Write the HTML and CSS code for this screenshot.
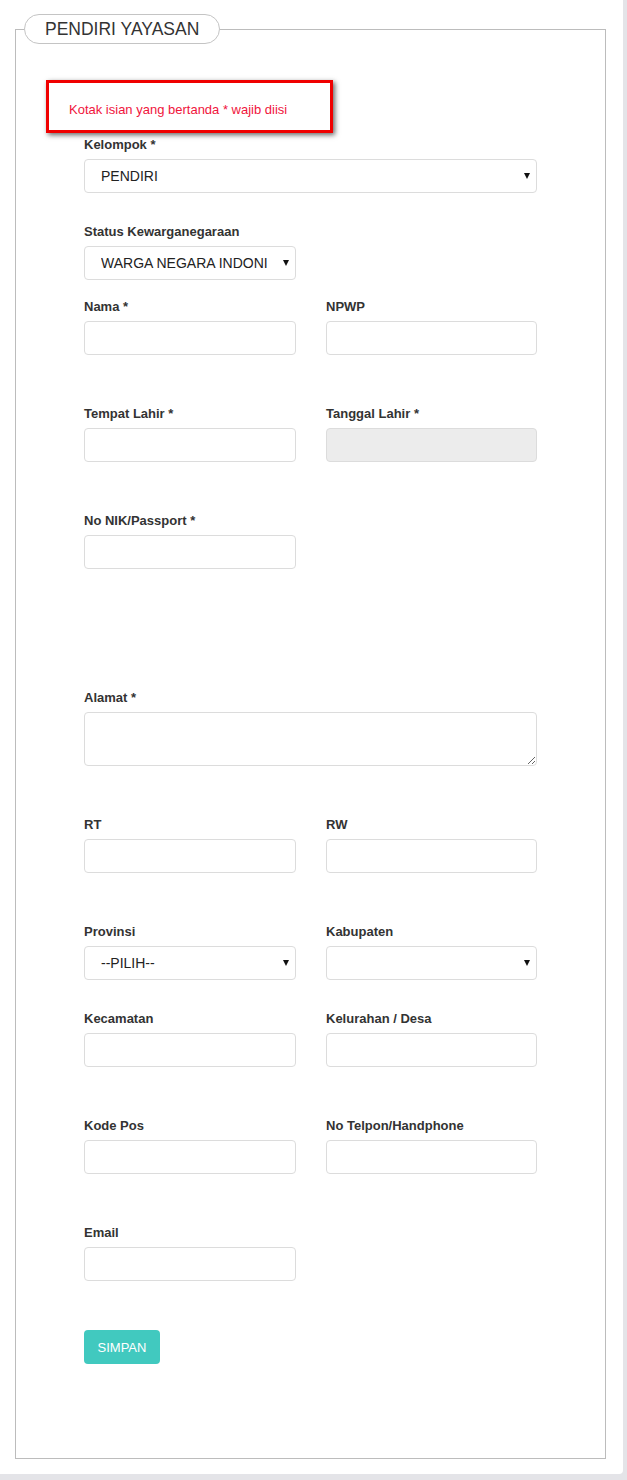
FILE: index.html
```html
<!DOCTYPE html>
<html>
<head>
<meta charset="utf-8">
<link rel="stylesheet" href="styles.css">
</head>
<body>
<div class="card">
  <fieldset class="box">
    <legend class="box-title">PENDIRI YAYASAN</legend>
    <div class="notice">Kotak isian yang bertanda * wajib diisi</div>
    <form class="form">
      <div class="group mt-2">
        <label class="lbl">Kelompok *</label>
        <div class="sel"><select class="ctl"><option>PENDIRI</option></select></div>
      </div>
      <div class="row mt-29">
        <div class="group">
          <label class="lbl">Status Kewarganegaraan</label>
          <div class="sel"><select class="ctl"><option>WARGA NEGARA INDONI</option></select></div>
        </div>
      </div>
      <div class="row mt-17">
        <div class="group"><label class="lbl">Nama *</label><input class="ctl" type="text"></div>
        <div class="group"><label class="lbl">NPWP</label><input class="ctl" type="text"></div>
      </div>
      <div class="row mt-49">
        <div class="group"><label class="lbl">Tempat Lahir *</label><input class="ctl" type="text"></div>
        <div class="group"><label class="lbl">Tanggal Lahir *</label><input class="ctl disabled" type="text" disabled></div>
      </div>
      <div class="row mt-49">
        <div class="group"><label class="lbl">No NIK/Passport *</label><input class="ctl" type="text"></div>
      </div>
      <div class="group mt-119">
        <label class="lbl">Alamat *</label>
        <textarea class="ctl area"></textarea>
      </div>
      <div class="row mt-49">
        <div class="group"><label class="lbl">RT</label><input class="ctl" type="text"></div>
        <div class="group"><label class="lbl">RW</label><input class="ctl" type="text"></div>
      </div>
      <div class="row mt-49">
        <div class="group">
          <label class="lbl">Provinsi</label>
          <div class="sel"><select class="ctl"><option>--PILIH--</option></select></div>
        </div>
        <div class="group">
          <label class="lbl">Kabupaten</label>
          <div class="sel"><select class="ctl"><option></option></select></div>
        </div>
      </div>
      <div class="row mt-29">
        <div class="group"><label class="lbl">Kecamatan</label><input class="ctl" type="text"></div>
        <div class="group"><label class="lbl">Kelurahan / Desa</label><input class="ctl" type="text"></div>
      </div>
      <div class="row mt-49">
        <div class="group"><label class="lbl">Kode Pos</label><input class="ctl" type="text"></div>
        <div class="group"><label class="lbl">No Telpon/Handphone</label><input class="ctl" type="text"></div>
      </div>
      <div class="row mt-49">
        <div class="group"><label class="lbl">Email</label><input class="ctl" type="text"></div>
      </div>
      <div class="actions">
        <button type="button" class="btn">SIMPAN</button>
      </div>
    </form>
  </fieldset>
</div>
</body>
</html>
```

FILE: styles.css
```css
html, body {
  margin: 0;
  padding: 0;
  background: #e4e4e8;
  font-family: "Liberation Sans", Arial, sans-serif;
  color: #333;
}

.card {
  width: 623px;
  height: 1474px;
  box-sizing: border-box;
  background: #fff;
  border-bottom-right-radius: 4px;
  padding: 14px 17px 0 15px;
}

.box {
  margin: 0;
  padding: 0 0 94px 0;
  border: 1px solid #bcbcbc;
  min-width: 0;
}

.box-title {
  margin-left: 8px;
  padding: 0 20px;
  height: 30px;
  box-sizing: border-box;
  border: 1px solid #c4c4c4;
  border-radius: 15px;
  font-size: 17.5px;
  line-height: 28px;
  color: #333;
}

.notice {
  margin: 36px 0 0 30px;
  width: 287px;
  height: 53px;
  box-sizing: border-box;
  border: 3px solid #f00000;
  box-shadow: 2px 2px 5px rgba(0, 0, 0, 0.6);
  padding: 14px 0 0 20px;
  font-size: 13px;
  line-height: 26px;
  color: #f0143c;
}

.form {
  margin-left: 68px;
  width: 453px;
}

.row {
  display: grid;
  grid-template-columns: 212px 211px;
  column-gap: 30px;
}

.group {
  display: flex;
  flex-direction: column;
}

.mt-2 { margin-top: 2px; }
.mt-17 { margin-top: 17px; }
.mt-29 { margin-top: 29px; }
.mt-49 { margin-top: 49px; }
.mt-119 { margin-top: 119px; }

.lbl {
  font-size: 13px;
  font-weight: bold;
  line-height: 20px;
  height: 20px;
  margin-bottom: 4px;
  color: #333;
}

.ctl {
  display: block;
  width: 100%;
  height: 34px;
  box-sizing: border-box;
  border: 1px solid #dcdcdc;
  border-radius: 4px;
  background: #fff;
  font-family: "Liberation Sans", Arial, sans-serif;
  font-size: 14px;
  color: #222;
  padding: 0 16px;
  margin: 0;
  outline: none;
}

.ctl.disabled {
  background: #ececec;
}

.area {
  height: 54px;
  resize: vertical;
  padding: 6px 12px;
}

.sel {
  position: relative;
}

.sel .ctl {
  -webkit-appearance: none;
  appearance: none;
  padding: 0 18px 0 16px;
  text-overflow: clip;
}

.sel::after {
  content: "";
  position: absolute;
  right: 7px;
  top: 14px;
  width: 0;
  height: 0;
  border-left: 3px solid transparent;
  border-right: 3px solid transparent;
  border-top: 6px solid #111;
  pointer-events: none;
}

.actions {
  margin-top: 49px;
}

.btn {
  display: block;
  width: 76px;
  height: 34px;
  border: none;
  border-radius: 4px;
  background: #41c9bf;
  color: #fff;
  font-family: "Liberation Sans", Arial, sans-serif;
  font-size: 13px;
  padding: 0;
  cursor: pointer;
}
```
